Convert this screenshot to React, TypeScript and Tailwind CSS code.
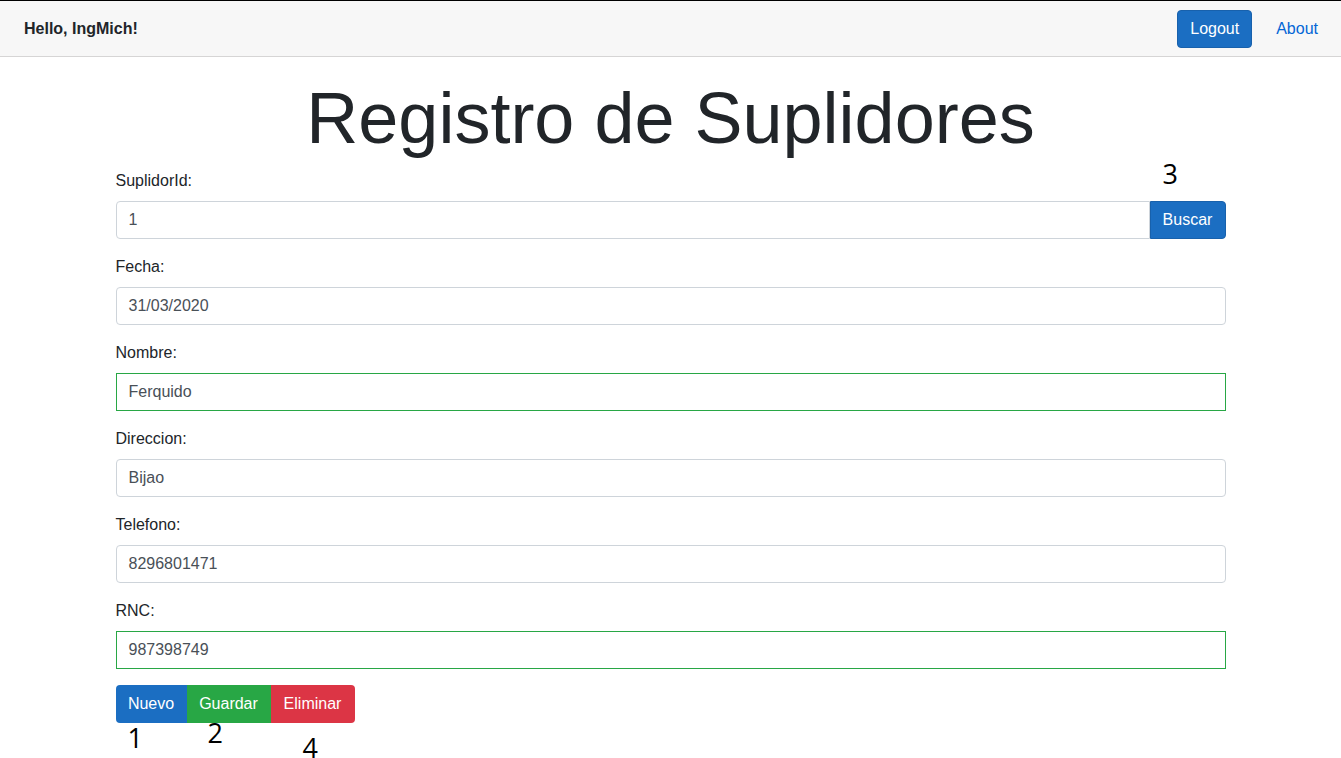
import React from "react";

const font = { fontFamily: '"Liberation Sans", Arial, Helvetica, sans-serif' };
const anno = { fontFamily: '"Open Sans", "Noto Sans", sans-serif' };

function Field({ label, value, green }: { label: string; value: string; green?: boolean }) {
  return (
    <div className="mb-4">
      <label className="block mb-2 text-[16px] leading-6 text-[#212529]">{label}</label>
      <div
        className={
          "h-[38px] w-full flex items-center px-3 text-[16px] text-[#495057] bg-white border border-[#ced4da] rounded " +
          (green ? "outline outline-1 outline-[#28a745] -outline-offset-1 rounded-none" : "")
        }
      >
        {value}
      </div>
    </div>
  );
}

export default function App() {
  return (
    <div className="min-h-screen bg-white text-[#212529]" style={font}>
      <div className="h-[57px] border-t border-black bg-[#f7f7f7] border-b border-b-[#d6d5d5] flex items-center pl-6 pr-[23px]">
        <span className="font-bold text-[16px]">Hello, IngMich!</span>
        <div className="ml-auto flex items-center">
          <button className="h-[38px] px-3 rounded bg-[#1b6ec2] border border-[#1861ac] text-white text-[16px]">Logout</button>
          <a className="ml-6 text-[16px] text-[#0366d6]">About</a>
        </div>
      </div>
      <div className="w-[1110px] mx-auto pt-[18px] relative">
        <h1 className="text-center text-[72px] leading-[1.2] font-light mb-2">Registro de Suplidores</h1>
        <div className="mb-4 relative">
          <label className="block mb-2 text-[16px] leading-6">SuplidorId:</label>
          <span className="absolute left-[1047px] top-[-15px] text-[27px] leading-[40px] text-black" style={anno}>3</span>
          <div className="flex h-[38px]">
            <div className="flex-1 flex items-center px-3 text-[16px] text-[#495057] border border-[#ced4da] rounded-l">1</div>
            <button className="w-[76px] bg-[#1b6ec2] border border-[#1861ac] text-white text-[16px] rounded-r">Buscar</button>
          </div>
        </div>
        <Field label="Fecha:" value="31/03/2020" />
        <Field label="Nombre:" value="Ferquido" green />
        <Field label="Direccion:" value="Bijao" />
        <Field label="Telefono:" value="8296801471" />
        <Field label="RNC:" value="987398749" green />
        <div className="relative flex h-[38px]">
          <button className="w-[71px] bg-[#1b6ec2] text-white text-[16px] rounded-l">Nuevo</button>
          <button className="w-[84px] bg-[#28a745] text-white text-[16px]">Guardar</button>
          <button className="w-[84px] bg-[#dc3545] text-white text-[16px] rounded-r">Eliminar</button>
          <span className="absolute left-[12px] top-[33px] text-[27px] leading-[40px] text-black" style={anno}>1</span>
          <span className="absolute left-[92px] top-[28px] text-[27px] leading-[40px] text-black" style={anno}>2</span>
          <span className="absolute left-[187px] top-[43px] text-[27px] leading-[40px] text-black" style={anno}>4</span>
        </div>
      </div>
    </div>
  );
}
